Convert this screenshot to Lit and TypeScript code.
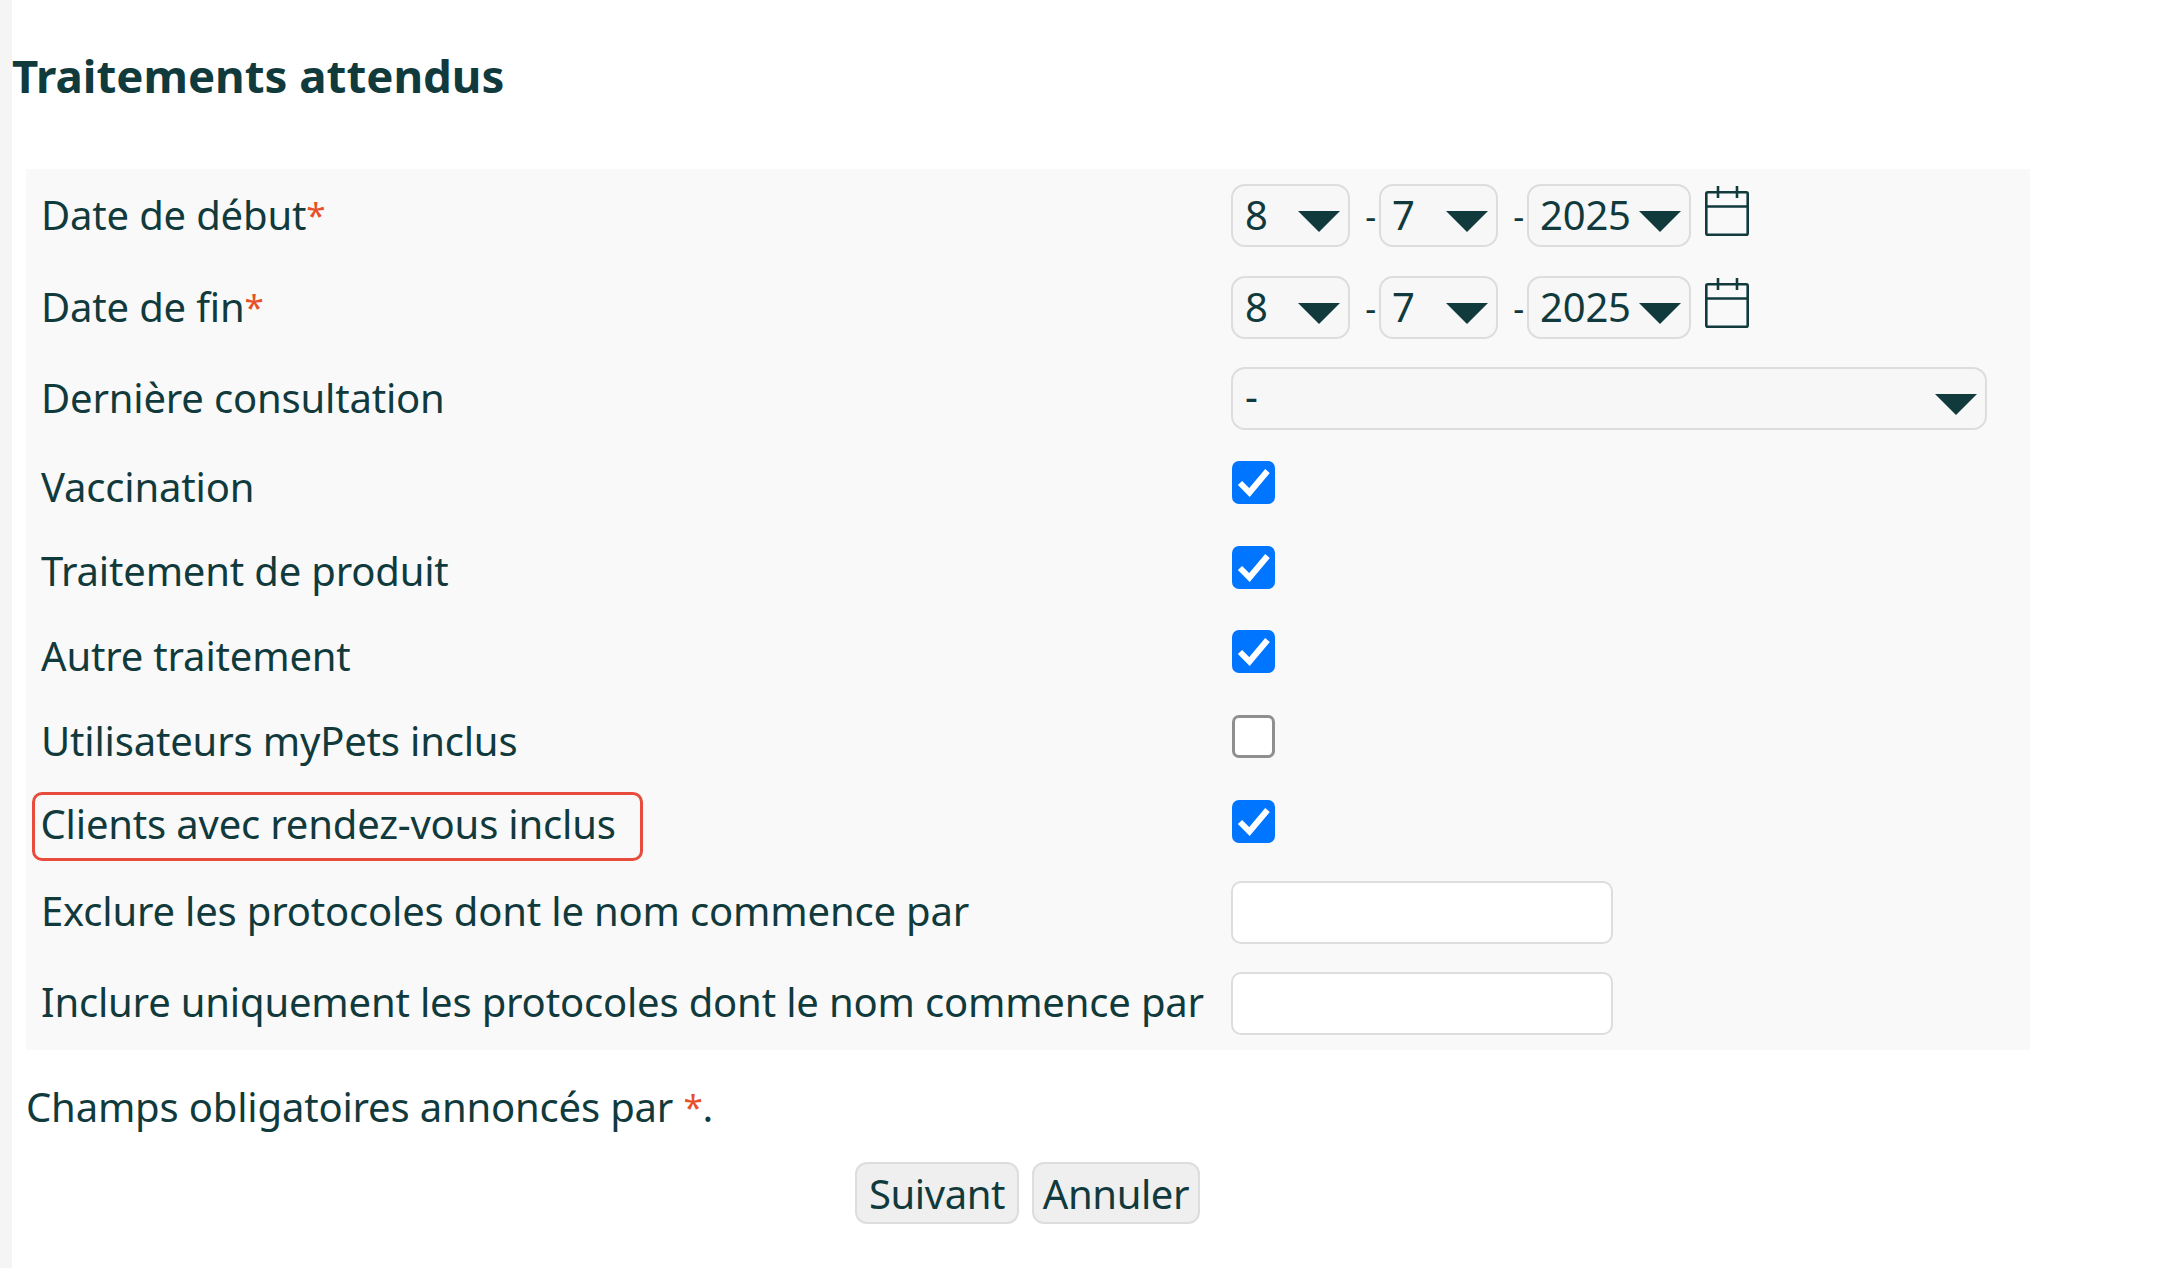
import { LitElement, html, css, svg } from 'lit';
import { customElement } from 'lit/decorators.js';

const arrow = html`<svg class="arrow" viewBox="0 0 42 21"><path d="M0 0H42L21 21Z" fill="#113a3c"></path></svg>`;

const calendar = html`<svg class="calendar" viewBox="0 0 44 50" fill="none" stroke="#113a3c" stroke-width="2.6">
  ${svg`<rect x="1.3" y="6.3" width="41.4" height="42.4" rx="1.5"></rect>
  <path d="M1 20.5H43M13 0V12M32 0V12"></path>`}
</svg>`;

const check = html`<svg viewBox="0 0 43 43"><path d="M8 22L17.5 31.5L35.5 10" fill="none" stroke="#fff" stroke-width="6"></path></svg>`;

@customElement('app-root')
export class AppRoot extends LitElement {
  static override styles = css`
    :host {
      display: flex;
      height: 1268px;
      background: #fff;
      color: #113a3c;
      font-family: 'Noto Sans', sans-serif;
      font-size: 40px;
      letter-spacing: -0.18px;
      overflow: hidden;
    }

    .strip {
      width: 12px;
      flex: none;
      background: #f5f5f5;
    }

    .page {
      flex: 1;
      padding-left: 14px;
      padding-right: 133px;
    }

    h1 {
      margin: 0 0 0 -14px;
      height: 169px;
      padding-top: 45px;
      box-sizing: border-box;
      font-size: 45.6px;
      line-height: 60px;
      font-weight: 700;
      letter-spacing: 0;
    }

    .form {
      display: grid;
      grid-template-columns: 1205px 1fr;
      padding-bottom: 2px;
      background: #f9f9f9;
    }

    .label {
      display: flex;
      align-items: center;
      padding-left: 15px;
      white-space: nowrap;
    }

    .field {
      display: flex;
      align-items: center;
    }

    .date { height: 92px; }
    .long { height: 90px; }
    .tick { height: 84.6px; }
    .text { height: 91px; }

    .date.label,
    .long.label,
    .text.label {
      padding-bottom: 2px;
      box-sizing: border-box;
    }

    .tick.label {
      padding-top: 2px;
      box-sizing: border-box;
    }

    .req {
      color: #e8502a;
      font-size: 35px;
      line-height: 1;
      vertical-align: 2px;
    }

    .select {
      height: 63px;
      box-sizing: border-box;
      display: flex;
      align-items: center;
      justify-content: space-between;
      padding: 0 8px 2px 12px;
      background: #f7f7f7;
      border: 2px solid #ddd;
      border-radius: 14px;
    }

    .select.short { width: 119px; }
    .select.short + .dash + .select.short { padding-left: 11px; }
    .select.year { width: 164px; padding-left: 11px; }
    .select.wide { width: 756px; }
    .select.wide span { margin-top: -4px; }

    .arrow {
      width: 42px;
      height: 21px;
      margin-top: 14px;
    }

    .dash {
      width: 29px;
      box-sizing: border-box;
      padding: 2px 3px 0 0;
      text-align: right;
      font-size: 34px;
    }

    .calendar {
      width: 44px;
      height: 50px;
      margin: -9px 0 0 14px;
    }

    .box {
      width: 43px;
      height: 43px;
      box-sizing: border-box;
      border-radius: 7px;
      background: #0075ff;
      margin: -5px 0 0 1px;
    }

    .box svg {
      display: block;
    }

    .box.off {
      background: #fff;
      border: 3px solid #8f8f8f;
    }

    .input {
      width: 382px;
      height: 63px;
      box-sizing: border-box;
      background: #fff;
      border: 2px solid #ddd;
      border-radius: 10px;
      margin-top: 2px;
    }

    .mark {
      margin: 4px 0 0 -9px;
      padding: 0 24px 6px 5.5px;
      height: 69px;
      box-sizing: border-box;
      display: flex;
      align-items: center;
      border: 3.5px solid #e74c3c;
      border-radius: 10px;
    }

    .note {
      margin: 32px 0 0;
      line-height: 50px;
    }

    .actions {
      display: flex;
      gap: 13px;
      margin: 30px 0 0 829px;
    }

    button {
      height: 62px;
      box-sizing: border-box;
      padding: 2px 0 0;
      font: inherit;
      letter-spacing: -0.4px;
      color: inherit;
      background: #efefef;
      border: 2px solid #ddd;
      border-radius: 12px;
    }

    .next { width: 164px; }
    .cancel { width: 168px; }
  `;

  private _date() {
    return html`
      <div class="select short"><span>8</span>${arrow}</div>
      <span class="dash">-</span>
      <div class="select short"><span>7</span>${arrow}</div>
      <span class="dash">-</span>
      <div class="select year"><span>2025</span>${arrow}</div>
      ${calendar}
    `;
  }

  private _tick(label: unknown, on: boolean) {
    return html`
      <div class="label tick">${label}</div>
      <div class="field tick">
        <div class="box ${on ? '' : 'off'}">${on ? check : ''}</div>
      </div>
    `;
  }

  override render() {
    return html`
      <div class="strip"></div>
      <div class="page">
        <h1>Traitements attendus</h1>
        <div class="form">
          <div class="label date">Date de début<span class="req">*</span></div>
          <div class="field date">${this._date()}</div>
          <div class="label date">Date de fin<span class="req">*</span></div>
          <div class="field date">${this._date()}</div>
          <div class="label long">Dernière consultation</div>
          <div class="field long">
            <div class="select wide"><span>-</span>${arrow}</div>
          </div>
          ${this._tick('Vaccination', true)}
          ${this._tick('Traitement de produit', true)}
          ${this._tick('Autre traitement', true)}
          ${this._tick('Utilisateurs myPets inclus', false)}
          ${this._tick(html`<span class="mark">Clients avec rendez-vous inclus</span>`, true)}
          <div class="label text">Exclure les protocoles dont le nom commence par</div>
          <div class="field text"><div class="input"></div></div>
          <div class="label text">Inclure uniquement les protocoles dont le nom commence par</div>
          <div class="field text"><div class="input"></div></div>
        </div>
        <p class="note">Champs obligatoires annoncés par <span class="req">*</span>.</p>
        <div class="actions">
          <button class="next" type="button">Suivant</button>
          <button class="cancel" type="button">Annuler</button>
        </div>
      </div>
    `;
  }
}

declare global {
  interface HTMLElementTagNameMap {
    'app-root': AppRoot;
  }
}
